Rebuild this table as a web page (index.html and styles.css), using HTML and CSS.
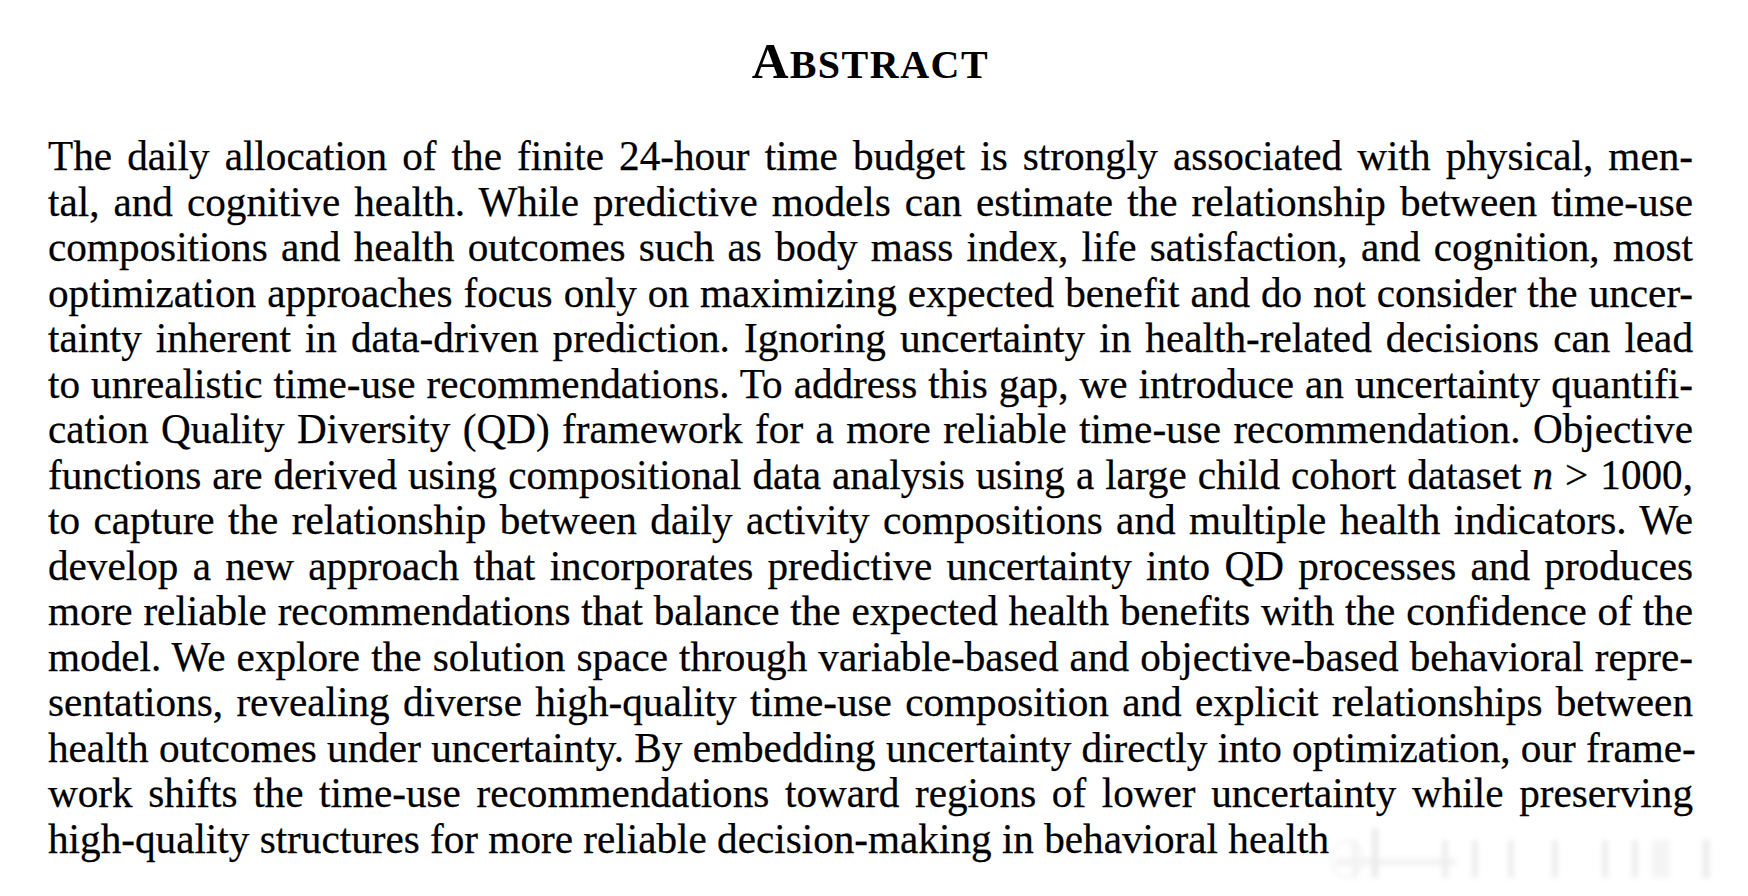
FILE: index.html
```html
<!DOCTYPE html>
<html lang="en">
<head>
<meta charset="utf-8">
<title>Abstract</title>
<link rel="stylesheet" href="styles.css">
</head>
<body>
<main class="page">
  <h1 class="title"><span class="cap">A</span><span class="sc">BSTRACT</span></h1>
  <div class="abstract">
    <div class="ln">The daily allocation of the finite 24-hour time budget is strongly associated with physical, men-</div>
    <div class="ln">tal, and cognitive health. While predictive models can estimate the relationship between time-use</div>
    <div class="ln">compositions and health outcomes such as body mass index, life satisfaction, and cognition, most</div>
    <div class="ln">optimization approaches focus only on maximizing expected benefit and do not consider the uncer-</div>
    <div class="ln">tainty inherent in data-driven prediction. Ignoring uncertainty in health-related decisions can lead</div>
    <div class="ln">to unrealistic time-use recommendations. To address this gap, we introduce an uncertainty quantifi-</div>
    <div class="ln">cation Quality Diversity (QD) framework for a more reliable time-use recommendation. Objective</div>
    <div class="ln">functions are derived using compositional data analysis using a large child cohort dataset <span class="math"><i>n</i><span class="rel">&gt;</span>1000</span>,</div>
    <div class="ln">to capture the relationship between daily activity compositions and multiple health indicators. We</div>
    <div class="ln">develop a new approach that incorporates predictive uncertainty into QD processes and produces</div>
    <div class="ln">more reliable recommendations that balance the expected health benefits with the confidence of the</div>
    <div class="ln">model. We explore the solution space through variable-based and objective-based behavioral repre-</div>
    <div class="ln">sentations, revealing diverse high-quality time-use composition and explicit relationships between</div>
    <div class="ln">health outcomes under uncertainty. By embedding uncertainty directly into optimization, our frame-</div>
    <div class="ln">work shifts the time-use recommendations toward regions of lower uncertainty while preserving</div>
    <div class="ln last">high-quality structures for more reliable decision-making in behavioral health</div>
  </div>
  <div class="watermark" aria-hidden="true">
    <span class="wm-ring"></span>
    <span class="wm-band"></span>
    <span class="wm-bar b1"></span>
    <span class="wm-bar b2"></span>
    <span class="wm-bar b3"></span>
    <span class="wm-bar b4"></span>
    <span class="wm-bar b5"></span>
    <span class="wm-bar b6"></span>
    <span class="wm-bar b7"></span>
    <span class="wm-bar b8"></span>
    <span class="wm-bar b9"></span>
    <span class="wm-bar b10"></span>
  </div>
</main>
</body>
</html>
```

FILE: styles.css
```css
html, body {
  margin: 0;
  padding: 0;
  background: #ffffff;
}

body {
  width: 1748px;
  height: 896px;
  overflow: hidden;
  font-family: "Liberation Serif", "Times New Roman", serif;
  color: #000000;
}

.page {
  position: relative;
  height: 896px;
  padding: 36px 55px 0 48px;
  box-sizing: border-box;
}

.title {
  margin: 0;
  text-align: center;
  font-weight: bold;
  font-size: 51px;
  line-height: 51px;
  height: 51px;
  letter-spacing: 1px;
}

.title .sc {
  font-size: 40px;
  letter-spacing: 1.5px;
}

.abstract {
  margin-top: 47px;
  font-size: 41.2px;
  line-height: 45.5px;
  -webkit-text-stroke: 0.25px #000;
}

.ln {
  text-align: justify;
  text-align-last: justify;
  white-space: nowrap;
}

.ln.last {
  text-align-last: left;
}

.math i {
  font-style: italic;
}

.math .rel {
  margin: 0 12px;
}

.watermark {
  position: absolute;
  left: 1328px;
  top: 826px;
  width: 400px;
  height: 54px;
  filter: blur(2.5px);
  opacity: 0.7;
}

.wm-ring {
  position: absolute;
  left: 2px;
  top: 14px;
  width: 34px;
  height: 38px;
  border-radius: 50%;
  border: 2px solid #ececec;
  box-sizing: border-box;
}

.wm-band {
  position: absolute;
  left: 8px;
  top: 32px;
  width: 120px;
  height: 8px;
  background: #efefef;
}

.wm-bar {
  position: absolute;
  top: 14px;
  width: 6px;
  height: 38px;
  background: #e6e6e6;
}

.b1 { left: 24px; background: #eeeeee; }
.b2 { left: 44px; top: 2px; height: 50px; background: #e2e2e2; }
.b3 { left: 114px; }
.b4 { left: 144px; }
.b5 { left: 180px; }
.b6 { left: 224px; }
.b7 { left: 274px; }
.b8 { left: 304px; }
.b9 { left: 324px; width: 18px; background: #f0f0f0; }
.b10 { left: 374px; width: 8px; }
```
